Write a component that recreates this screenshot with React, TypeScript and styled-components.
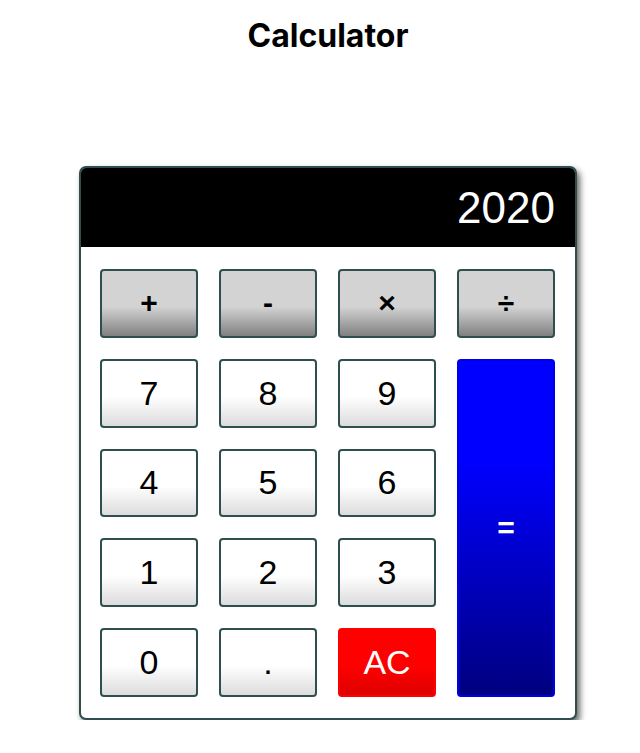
import styled, { createGlobalStyle } from 'styled-components'

const GlobalStyle = createGlobalStyle`
  body {
    margin: 8px;
    background: #fff;
    font-family: 'Liberation Sans', Arial, sans-serif;
  }
`

type Kind = 'op' | 'num' | 'clear' | 'equals'

const Page = styled.div`
  padding-left: 16px;
  display: flex;
  flex-direction: column;
  align-items: center;
`

const Title = styled.h1`
  margin: 8px 0 0;
  font-family: Inter, 'Noto Sans', sans-serif;
  font-weight: 700;
  font-size: 32px;
  line-height: 40px;
  color: #000;
`

const Calc = styled.div`
  margin-top: 110px;
  width: 494px;
  border: 2px solid #2f4f4f;
  border-radius: 7px;
  overflow: hidden;
  background: #fff;
  box-shadow: 3px 4px 6px rgba(0, 0, 0, 0.6);
`

const Display = styled.div`
  height: 79px;
  background: #000;
  color: #fff;
  font-size: 44px;
  display: flex;
  align-items: center;
  justify-content: flex-end;
  padding: 0 20px;
`

const Keys = styled.div`
  display: grid;
  grid-template-columns: repeat(4, 98px);
  grid-auto-rows: 68.75px;
  column-gap: 21px;
  row-gap: 21px;
  padding: 22px 20px 21px 19px;
`

const backgrounds: Record<Kind, string> = {
  op: 'linear-gradient(#d3d3d3 0%, #d3d3d3 55%, #808080 100%)',
  num: 'linear-gradient(#fff 0%, #fff 55%, #dcdcdc 100%)',
  clear: 'linear-gradient(#ff0000 0%, #ff0000 55%, #dd0000 100%)',
  equals: 'linear-gradient(#0000ff 0%, #0000ff 30%, #000080 100%)',
}

const sizes: Record<Kind, string> = {
  op: '30px',
  num: '34px',
  clear: '34px',
  equals: '30px',
}

const Key = styled.button<{ $kind: Kind; $span?: number }>`
  grid-row: ${(p) => (p.$span ? `span ${p.$span}` : 'auto')};
  border: 2px solid ${(p) =>
    p.$kind === 'clear' ? '#f00' : p.$kind === 'equals' ? '#0000e8' : '#2f4f4f'};
  border-radius: 4px;
  background: ${(p) => backgrounds[p.$kind]};
  color: ${(p) => (p.$kind === 'clear' || p.$kind === 'equals' ? '#fff' : '#000')};
  font-family: 'Liberation Sans', Arial, sans-serif;
  font-size: ${(p) => sizes[p.$kind]};
  font-weight: ${(p) => (p.$kind === 'op' || p.$kind === 'equals' ? 700 : 400)};
  padding: 0;
  display: flex;
  align-items: center;
  justify-content: center;
  cursor: pointer;
`

const App = () => (
  <Page>
    <GlobalStyle />
    <Title>Calculator</Title>
    <Calc>
      <Display>2020</Display>
      <Keys>
        <Key $kind="op">+</Key>
        <Key $kind="op">-</Key>
        <Key $kind="op">×</Key>
        <Key $kind="op">÷</Key>
        <Key $kind="num">7</Key>
        <Key $kind="num">8</Key>
        <Key $kind="num">9</Key>
        <Key $kind="equals" $span={4}>=</Key>
        <Key $kind="num">4</Key>
        <Key $kind="num">5</Key>
        <Key $kind="num">6</Key>
        <Key $kind="num">1</Key>
        <Key $kind="num">2</Key>
        <Key $kind="num">3</Key>
        <Key $kind="num">0</Key>
        <Key $kind="num">.</Key>
        <Key $kind="clear">AC</Key>
      </Keys>
    </Calc>
  </Page>
)

export default App
